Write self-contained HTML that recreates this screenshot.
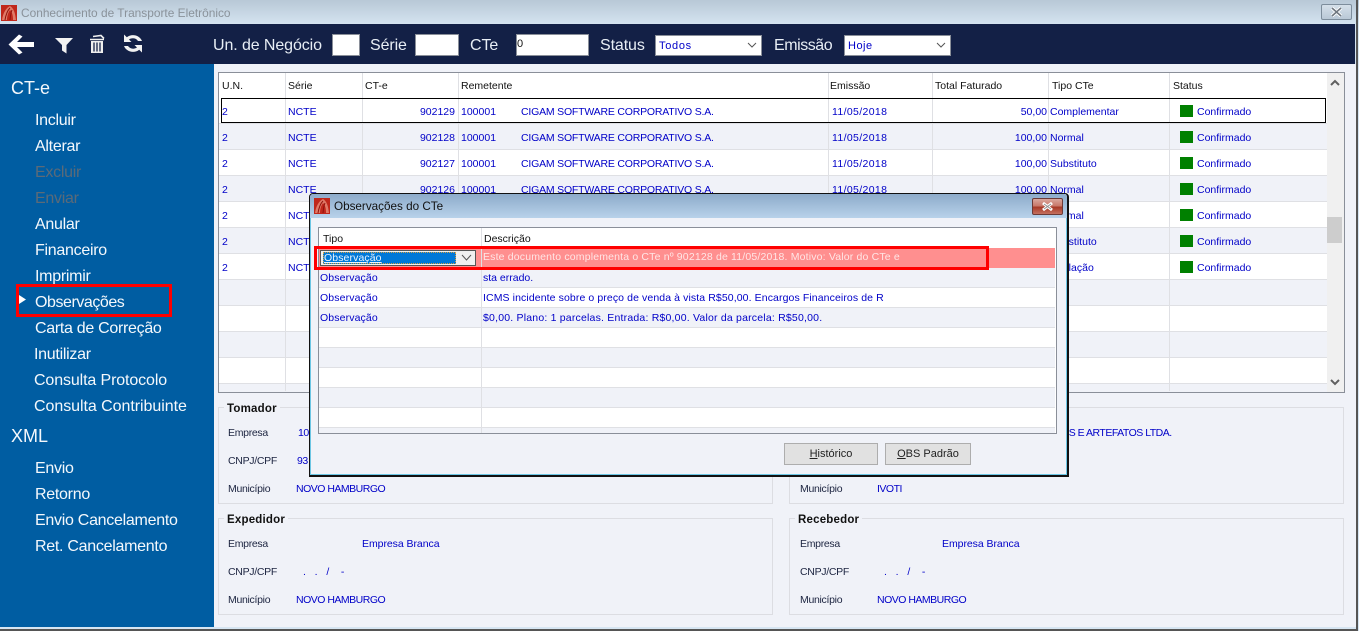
<!DOCTYPE html>
<html><head><meta charset="utf-8"><style>
html,body{margin:0;padding:0}
body{width:1359px;height:631px;overflow:hidden;position:relative;background:#fff;font-family:"Liberation Sans",sans-serif}
div,span{position:absolute;box-sizing:border-box}
.t{white-space:nowrap}
.m{font-size:16px;line-height:20px;color:#f4f8fc;left:35px;margin-top:2px;letter-spacing:-.28px}
.h{font-size:16px;line-height:20px;color:#e8eef5;top:36px;letter-spacing:-.1px}
.in{background:#fff;border:1px solid #8a8f99}
.hd{font-size:10.5px;line-height:14px;color:#111;top:79px}
.r{left:219px;width:1108px;height:26px;border-bottom:1px solid #dfe0e4;font-size:10.5px;line-height:16px;color:#0000c8}
.r span{top:6px;white-space:nowrap}
.w{background:#fff}.a{background:#f0f2f8}
.cl{top:73px;width:1px;height:318px;background:#dfe0e4}
.c1{left:3px}.c2{left:69px}.c3{left:166px;width:70px;text-align:right}.c3b{left:242px}.c4{left:302px;letter-spacing:-.2px}.c5{left:613px;letter-spacing:.35px}.c6{left:715px;width:113px;text-align:right}.c7{left:831px}
.c8{left:961px;top:7px!important;width:13px;height:12px;background:#008000}.c9{left:978px}
.g{border:1px solid #dcdde2;left:218px;width:555px;height:97px}
.gl{font-size:11.5px;font-weight:bold;line-height:14px;color:#111;background:#f0f2f8;padding:0 3px;white-space:nowrap;letter-spacing:.2px}
.l{font-size:10.5px;line-height:14px;color:#1c2440;white-space:nowrap;letter-spacing:-.3px}
.v{font-size:10.5px;line-height:14px;color:#0000c8;white-space:nowrap;letter-spacing:-.5px}
.dr{left:10px;width:737px;height:20px;border-bottom:1px solid #dfe0e4;font-size:10.5px;line-height:16px;color:#0000c8}
.dr span{top:2px;white-space:nowrap}
</style></head><body>

<!-- window -->
<div style="left:0;top:0;width:1359px;height:24px;background:linear-gradient(#b8c8d6,#d4e3f0)"></div>
<div style="left:0;top:24px;width:1359px;height:607px;background:#d6e5f2"></div>
<div class="t" style="left:21px;top:5px;font-size:11.9px;line-height:16px;color:#8a929a">Conhecimento de Transporte Eletrônico</div>
<svg style="position:absolute;left:1px;top:5px" width="16" height="16" viewBox="0 0 16 16"><rect width="16" height="16" fill="#c0271b"/><path d="M1 15C2 8 5 3 9 1C12 3 14 6 15 15L12 15C12 10 11 7 9 5C7 8 6 11 6 15Z" fill="#e07a68"/><path d="M4 15C5 9 7 5 9 3M9 15C9.500 10 10 7 11 5" stroke="#8f120c" fill="none"/></svg>
<div style="left:1321px;top:4px;width:31px;height:16px;border:1px solid #7d8d9c;border-radius:2px;background:linear-gradient(#d5e0ea,#b9c8d6)"></div>
<svg style="position:absolute;left:1330px;top:7px" width="13" height="10" viewBox="0 0 13 10"><path d="M2 1L11 9M11 1L2 9" stroke="#fff" stroke-width="3.4"/><path d="M2 1L11 9M11 1L2 9" stroke="#6f7780" stroke-width="1.6"/></svg>

<!-- top bar -->
<div style="left:0;top:24px;width:1355px;height:40px;background:#132046"></div>
<svg style="position:absolute;left:7px;top:32px" width="28" height="24" viewBox="0 0 28 24"><path d="M1.500 12.500L12 2.500L15.500 4.500L10 10H27V15H10L15.500 20.500L12 22.500Z" fill="#fff"/></svg>
<svg style="position:absolute;left:54px;top:37px" width="20" height="17" viewBox="0 0 20 17"><path d="M1 1H19L12.500 8V16.500L8 13.500V8Z" fill="#f2f2f2"/></svg>
<svg style="position:absolute;left:88px;top:33px" width="18" height="21" viewBox="0 0 18 21"><path d="M2 6.500L16 6.500M5 3.500L13 2.500L16 5.500" stroke="#eee" stroke-width="1.600" fill="none"/><path d="M3 8H15V20H3Z" fill="#eee"/><path d="M6 9.500V18.500M9 9.500V18.500M12 9.500V18.500" stroke="#132046" stroke-width="1.300"/></svg>
<svg style="position:absolute;left:122px;top:33px" width="22" height="21" viewBox="0 0 22 21"><path d="M2 1.500V9H9.500L7 6.500C10 4.500 14 5 16 8H20C18 2.500 10 0 4.800 4.300Z" fill="#f2f2f2"/><path d="M20 19.500V12H12.500L15 14.500C12 16.500 8 16 6 13H2C4 18.500 12 21 17.200 16.700Z" fill="#f2f2f2"/></svg>

<div class="t h" style="left:213px">Un. de Negócio</div>
<div class="in" style="left:332px;top:34px;width:28px;height:22px"></div>
<div class="t h" style="left:370px">Série</div>
<div class="in" style="left:415px;top:34px;width:44px;height:22px"></div>
<div class="t h" style="left:470px">CTe</div>
<div class="in" style="left:516px;top:34px;width:73px;height:22px;font-size:11px;line-height:18px;color:#111">0</div>
<div class="t h" style="left:600px">Status</div>
<div class="in" style="left:655px;top:35px;width:107px;height:21px;font-size:11px;line-height:20px;color:#0000c8;padding-left:3px;letter-spacing:.7px">Todos</div>
<svg style="position:absolute;left:747px;top:42px" width="10" height="7" viewBox="0 0 10 7"><path d="M1 1L5 5L9 1" stroke="#555" fill="none"/></svg>
<div class="t h" style="left:774px;letter-spacing:-.45px">Emissão</div>
<div class="in" style="left:844px;top:35px;width:107px;height:21px;font-size:11px;line-height:20px;color:#0000c8;padding-left:3px;letter-spacing:.5px">Hoje</div>
<svg style="position:absolute;left:936px;top:42px" width="10" height="7" viewBox="0 0 10 7"><path d="M1 1L5 5L9 1" stroke="#555" fill="none"/></svg>

<!-- content -->
<div style="left:214px;top:64px;width:1142px;height:563px;background:#f0f2f8"></div>
<div style="left:0;top:629px;width:1357px;height:2px;background:#555"></div>
<div style="left:1356px;top:0;width:2px;height:631px;background:#555"></div>

<!-- sidebar -->
<div style="left:0;top:64px;width:214px;height:563px;background:#005da2"></div>
<div class="t" style="left:11px;top:77px;font-size:18px;line-height:22px;color:#f4f8fc">CT-e</div>
<div class="t m" style="top:109px">Incluir</div>
<div class="t m" style="top:135px">Alterar</div>
<div class="t m" style="top:161px;color:#5b6a78">Excluir</div>
<div class="t m" style="top:187px;color:#5b6a78">Enviar</div>
<div class="t m" style="top:213px">Anular</div>
<div class="t m" style="top:239px">Financeiro</div>
<div class="t m" style="top:265px">Imprimir</div>
<div class="t m" style="top:291px;letter-spacing:-.45px">Observações</div>
<div class="t m" style="top:317px;letter-spacing:-.3px">Carta de Correção</div>
<div class="t m" style="top:343px;left:34px">Inutilizar</div>
<div class="t m" style="top:369px;left:34px;letter-spacing:-.12px">Consulta Protocolo</div>
<div class="t m" style="top:395px;left:34px;letter-spacing:-.05px">Consulta Contribuinte</div>
<div class="t" style="left:11px;top:425px;font-size:18px;line-height:22px;color:#f4f8fc">XML</div>
<div class="t m" style="top:457px">Envio</div>
<div class="t m" style="top:483px">Retorno</div>
<div class="t m" style="top:509px">Envio Cancelamento</div>
<div class="t m" style="top:535px">Ret. Cancelamento</div>
<svg style="position:absolute;left:18px;top:295px" width="9" height="9" viewBox="0 0 9 9"><path d="M1 0L8 4.500L1 9Z" fill="#fff"/></svg>
<div style="left:16px;top:284px;width:156px;height:33px;border:3px solid #f00"></div>

<!-- main grid -->
<div style="left:218px;top:72px;width:1127px;height:321px;border:1px solid #8a8f99;background:#fff"></div>
<div class="t hd" style="left:222px">U.N.</div>
<div class="t hd" style="left:288px">Série</div>
<div class="t hd" style="left:365px">CT-e</div>
<div class="t hd" style="left:461px">Remetente</div>
<div class="t hd" style="left:830px">Emissão</div>
<div class="t hd" style="left:935px">Total Faturado</div>
<div class="t hd" style="left:1052px">Tipo CTe</div>
<div class="t hd" style="left:1173px">Status</div>

<div class="r w" style="top:98px"><span class="c1">2</span><span class="c2">NCTE</span><span class="c3">902129</span><span class="c3b">100001</span><span class="c4">CIGAM SOFTWARE CORPORATIVO S.A.</span><span class="c5">11/05/2018</span><span class="c6">50,00</span><span class="c7">Complementar</span><span class="c8"></span><span class="c9">Confirmado</span></div>
<div class="r a" style="top:124px"><span class="c1">2</span><span class="c2">NCTE</span><span class="c3">902128</span><span class="c3b">100001</span><span class="c4">CIGAM SOFTWARE CORPORATIVO S.A.</span><span class="c5">11/05/2018</span><span class="c6">100,00</span><span class="c7">Normal</span><span class="c8"></span><span class="c9">Confirmado</span></div>
<div class="r w" style="top:150px"><span class="c1">2</span><span class="c2">NCTE</span><span class="c3">902127</span><span class="c3b">100001</span><span class="c4">CIGAM SOFTWARE CORPORATIVO S.A.</span><span class="c5">11/05/2018</span><span class="c6">100,00</span><span class="c7">Substituto</span><span class="c8"></span><span class="c9">Confirmado</span></div>
<div class="r a" style="top:176px"><span class="c1">2</span><span class="c2">NCTE</span><span class="c3">902126</span><span class="c3b">100001</span><span class="c4">CIGAM SOFTWARE CORPORATIVO S.A.</span><span class="c5">11/05/2018</span><span class="c6">100,00</span><span class="c7">Normal</span><span class="c8"></span><span class="c9">Confirmado</span></div>
<div class="r w" style="top:202px"><span class="c1">2</span><span class="c2">NCTE</span><span class="c7">Normal</span><span class="c8"></span><span class="c9">Confirmado</span></div>
<div class="r a" style="top:228px"><span class="c1">2</span><span class="c2">NCTE</span><span class="c7">Substituto</span><span class="c8"></span><span class="c9">Confirmado</span></div>
<div class="r w" style="top:254px"><span class="c1">2</span><span class="c2">NCTE</span><span class="c7">Anulação</span><span class="c8"></span><span class="c9">Confirmado</span></div>
<div class="r a" style="top:280px"></div>
<div class="r w" style="top:306px"></div>
<div class="r a" style="top:332px"></div>
<div class="r w" style="top:358px"></div>
<div class="a" style="left:219px;top:384px;width:1108px;height:8px"></div>

<div class="cl" style="left:285px"></div><div class="cl" style="left:362px"></div><div class="cl" style="left:458px"></div><div class="cl" style="left:828px"></div><div class="cl" style="left:932px"></div><div class="cl" style="left:1048px"></div><div class="cl" style="left:1169px"></div>
<div style="left:221px;top:98px;width:1105px;height:25px;border:1.500px solid #000"></div>

<div style="left:1327px;top:73px;width:17px;height:319px;background:#f0f0f0"></div>
<div style="left:1327px;top:217px;width:15px;height:26px;background:#cdcdcd"></div>
<svg style="position:absolute;left:1330px;top:79px" width="10" height="8" viewBox="0 0 10 8"><path d="M1 6L5 2L9 6" stroke="#606060" stroke-width="2" fill="none"/></svg>
<svg style="position:absolute;left:1330px;top:378px" width="10" height="8" viewBox="0 0 10 8"><path d="M1 2L5 6L9 2" stroke="#606060" stroke-width="2" fill="none"/></svg>

<!-- group boxes -->
<div class="g" style="top:407px"></div>
<div class="g" style="top:518px"></div>
<div class="g" style="left:789px;width:555px;top:407px"></div>
<div class="g" style="left:789px;width:555px;top:518px"></div>
<div class="gl" style="left:224px;top:402px">Tomador</div>
<div class="gl" style="left:224px;top:513px">Expedidor</div>
<div class="gl" style="left:795px;top:513px">Recebedor</div>
<div class="l" style="left:228px;top:426px">Empresa</div>
<div class="v" style="left:298px;top:426px">10</div>
<div class="l" style="left:228px;top:454px">CNPJ/CPF</div>
<div class="v" style="left:297px;top:454px">93</div>
<div class="l" style="left:228px;top:482px">Município</div>
<div class="v" style="left:296px;top:482px">NOVO HAMBURGO</div>
<div class="v" style="left:1054px;top:426px">DOS E ARTEFATOS LTDA.</div>
<div class="l" style="left:800px;top:482px">Município</div>
<div class="v" style="left:877px;top:482px">IVOTI</div>
<div class="l" style="left:228px;top:537px">Empresa</div>
<div class="v" style="left:362px;top:537px;letter-spacing:-.05px">Empresa Branca</div>
<div class="l" style="left:228px;top:565px">CNPJ/CPF</div>
<div class="v" style="left:303px;top:565px;white-space:pre;letter-spacing:0">.   .   /    -</div>
<div class="l" style="left:228px;top:593px">Município</div>
<div class="v" style="left:296px;top:593px">NOVO HAMBURGO</div>
<div class="l" style="left:800px;top:537px">Empresa</div>
<div class="v" style="left:942px;top:537px;letter-spacing:-.05px">Empresa Branca</div>
<div class="l" style="left:800px;top:565px">CNPJ/CPF</div>
<div class="v" style="left:884px;top:565px;white-space:pre;letter-spacing:0">.   .   /    -</div>
<div class="l" style="left:800px;top:593px">Município</div>
<div class="v" style="left:877px;top:593px">NOVO HAMBURGO</div>

<!-- dialog -->
<div style="left:309px;top:193px;width:760px;height:284px;background:#f0f2f8;border:1px solid #111;border-bottom-width:2px;border-right-width:2px;border-top-left-radius:4px;border-top-right-radius:4px"></div>
<div style="left:310px;top:194px;width:757px;height:24px;background:linear-gradient(#8dabca,#b8d2ea);border-top-left-radius:3px;border-top-right-radius:3px"></div>
<div style="left:310px;top:218px;width:1px;height:257px;background:#6cc6e4"></div>
<div style="left:1066px;top:218px;width:1px;height:257px;background:#6cc6e4"></div>
<div style="left:310px;top:474px;width:757px;height:1px;background:#6cc6e4"></div>
<svg style="position:absolute;left:314px;top:198px" width="16" height="16" viewBox="0 0 16 16"><rect width="16" height="16" fill="#c0271b"/><path d="M1 15C2 8 5 3 9 1C12 3 14 6 15 15L12 15C12 10 11 7 9 5C7 8 6 11 6 15Z" fill="#e07a68"/><path d="M4 15C5 9 7 5 9 3M9 15C9.500 10 10 7 11 5" stroke="#8f120c" fill="none"/></svg>
<div class="t" style="left:334px;top:199px;font-size:11.7px;line-height:16px;color:#111">Observações do CTe</div>
<div style="left:1032px;top:198px;width:31px;height:17px;border:1px solid #6d3a36;border-radius:2px;background:linear-gradient(#d9a79d 0%,#c9796b 45%,#a83a28 55%,#c4705f 100%)"></div>
<svg style="position:absolute;left:1041px;top:202px" width="13" height="9" viewBox="0 0 13 9"><path d="M2 1L11 8M11 1L2 8" stroke="#fff" stroke-width="3"/><path d="M3 2L10 7M10 2L3 7" stroke="#8c8c8c" stroke-width="1"/></svg>

<div style="left:318px;top:227px;width:739px;height:207px;border:1px solid #8a8f99;background:#fff;overflow:hidden">
 <div class="t" style="left:4px;top:4px;font-size:10.5px;line-height:14px;color:#111">Tipo</div>
 <div class="t" style="left:165px;top:4px;font-size:10.5px;line-height:14px;color:#111">Descrição</div>
</div>
<div style="left:319px;top:248px;width:736px;height:20px;background:#ff8f8f"></div>
<div style="left:320px;top:250px;width:156px;height:16px;border:1px solid #555;background:#f0f0f0"></div>
<div style="left:323px;top:252px;width:133px;height:12px;background:#0078d7;border:1px dotted #d8a040"></div>
<div class="t" style="left:324px;top:250px;font-size:10.5px;line-height:16px;color:#e8f4ff;text-decoration:underline;letter-spacing:.1px">Observação</div>
<svg style="position:absolute;left:461px;top:254px" width="11" height="8" viewBox="0 0 11 8"><path d="M1 1L5.500 6L10 1" stroke="#555" fill="none"/></svg>
<div class="t" style="left:483px;top:249px;font-size:10.5px;line-height:16px;color:#ffe6e6;letter-spacing:.17px">Este documento complementa o CTe nº 902128 de 11/05/2018. Motivo: Valor do CTe e</div>
<div class="dr a" style="left:319px;top:268px;width:736px"><span style="left:1px;letter-spacing:.12px">Observação</span><span style="left:164px">sta errado.</span></div>
<div class="dr w" style="left:319px;top:288px;width:736px"><span style="left:1px;letter-spacing:.12px">Observação</span><span style="left:164px;letter-spacing:.1px">ICMS incidente sobre o preço de venda à vista R$50,00. Encargos Financeiros de R</span></div>
<div class="dr a" style="left:319px;top:308px;width:736px"><span style="left:1px;letter-spacing:.12px">Observação</span><span style="left:164px;letter-spacing:.2px">$0,00. Plano: 1 parcelas. Entrada: R$0,00. Valor da parcela: R$50,00.</span></div>
<div class="dr w" style="left:319px;top:328px;width:736px"></div>
<div class="dr a" style="left:319px;top:348px;width:736px"></div>
<div class="dr w" style="left:319px;top:368px;width:736px"></div>
<div class="dr a" style="left:319px;top:388px;width:736px"></div>
<div class="dr w" style="left:319px;top:408px;width:736px"></div>
<div class="a" style="left:319px;top:428px;width:736px;height:5px"></div>
<div style="left:481px;top:228px;width:1px;height:205px;background:#dfe0e4"></div>
<div style="left:314px;top:246px;width:675px;height:24px;border:3px solid #f00"></div>

<div style="left:784px;top:443px;width:94px;height:22px;background:#e1e1e1;border:1px solid #adadad;font-size:11px;line-height:20px;color:#222;text-align:center"><u>H</u>istórico</div>
<div style="left:885px;top:443px;width:86px;height:22px;background:#e1e1e1;border:1px solid #adadad;font-size:11px;line-height:20px;color:#222;text-align:center"><u>O</u>BS Padrão</div>
</body></html>
